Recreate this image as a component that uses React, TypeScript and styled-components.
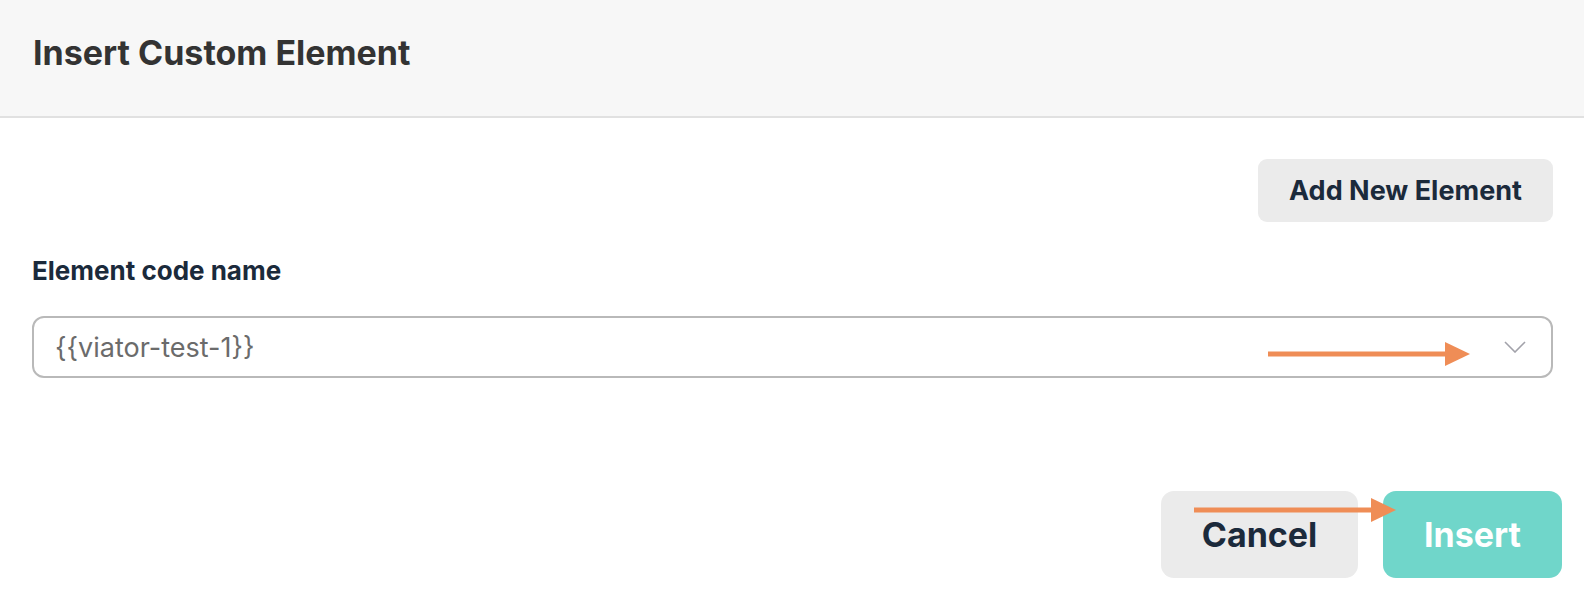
import React from "react";
import styled, { createGlobalStyle } from "styled-components";

const GlobalStyle = createGlobalStyle`
  html, body { margin: 0; padding: 0; background: #ffffff; }
  body { font-family: Inter, "Noto Sans", sans-serif; -webkit-font-smoothing: antialiased; }
  * { box-sizing: border-box; }
`;

const Page = styled.div`
  width: 1584px;
  height: 602px;
  background: #ffffff;
  overflow: hidden;
`;

const Header = styled.header`
  height: 118px;
  padding: 36px 33px 0;
  background: #f7f7f7;
  border-bottom: 2px solid #e1e1e1;
`;

const Title = styled.h1`
  margin: 0;
  font-size: 34px;
  line-height: 34px;
  font-weight: 700;
  color: #333333;
`;

const Body = styled.main`
  padding: 41px 31px 0 32px;
  display: flex;
  flex-direction: column;
`;

const Toolbar = styled.div`
  display: flex;
  justify-content: flex-end;
`;

const SecondaryButton = styled.button`
  height: 63px;
  width: 295px;
  border: none;
  border-radius: 9px;
  background: #ebebeb;
  color: #1b2a3b;
  font-family: inherit;
  font-size: 27px;
  font-weight: 700;
  display: flex;
  align-items: center;
  justify-content: center;
  padding: 0;
`;

const Field = styled.div`
  margin-top: 36px;
  display: flex;
  flex-direction: column;
  gap: 32px;
`;

const Label = styled.label`
  font-size: 26px;
  line-height: 26px;
  font-weight: 700;
  color: #1b2a3b;
`;

const Select = styled.div`
  position: relative;
  height: 62px;
  border: 2px solid #b9b9b9;
  border-radius: 12px;
  padding: 0 25px 0 21px;
  display: flex;
  align-items: center;
  justify-content: space-between;
`;

const Value = styled.span`
  font-size: 27px;
  font-weight: 400;
  color: #6b6b6b;
`;

const Chevron = styled.svg`
  width: 22px;
  height: 12px;
  display: block;
`;

const Annotation = styled.svg<{ $top: number; $left?: number; $right?: number }>`
  position: absolute;
  top: ${(p) => p.$top}px;
  ${(p) => (p.$left !== undefined ? `left: ${p.$left}px;` : "")}
  ${(p) => (p.$right !== undefined ? `right: ${p.$right}px;` : "")}
  width: 202px;
  height: 24px;
  z-index: 2;
  pointer-events: none;
`;

const Footer = styled.div`
  margin-top: 113px;
  margin-right: -9px;
  display: flex;
  justify-content: flex-end;
  gap: 25px;
`;

const ActionButton = styled.button<{ $primary?: boolean; $width: number }>`
  position: relative;
  width: ${(p) => p.$width}px;
  height: 87px;
  border: none;
  border-radius: 13px;
  padding: 0;
  background: ${(p) => (p.$primary ? "#70d6ca" : "#ebebeb")};
  color: ${(p) => (p.$primary ? "#ffffff" : "#1b2a3b")};
  font-family: inherit;
  font-size: 34px;
  font-weight: 700;
  display: flex;
  align-items: center;
  justify-content: center;
`;

const Arrow: React.FC<{ top: number; left?: number; right?: number }> = ({ top, left, right }) => (
  <Annotation $top={top} $left={left} $right={right} viewBox="0 0 202 24">
    <line x1="0" y1="12" x2="180" y2="12" stroke="#ef8d56" strokeWidth="5" />
    <polygon points="177,0 202,12 177,24" fill="#ef8d56" />
  </Annotation>
);

export default function App() {
  return (
    <Page>
      <GlobalStyle />
      <Header>
        <Title>Insert Custom Element</Title>
      </Header>
      <Body>
        <Toolbar>
          <SecondaryButton>Add New Element</SecondaryButton>
        </Toolbar>
        <Field>
          <Label>Element code name</Label>
          <Select>
            <Value>{"{{viator-test-1}}"}</Value>
            <Chevron viewBox="0 0 22 12">
              <polyline points="1,1 11,11 21,1" fill="none" stroke="#a2a2aa" strokeWidth="1.6" />
            </Chevron>
            <Arrow top={24} right={81} />
          </Select>
        </Field>
        <Footer>
          <ActionButton $width={197}>
            Cancel
            <Arrow top={7} left={33} />
          </ActionButton>
          <ActionButton $primary $width={179}>
            Insert
          </ActionButton>
        </Footer>
      </Body>
    </Page>
  );
}
